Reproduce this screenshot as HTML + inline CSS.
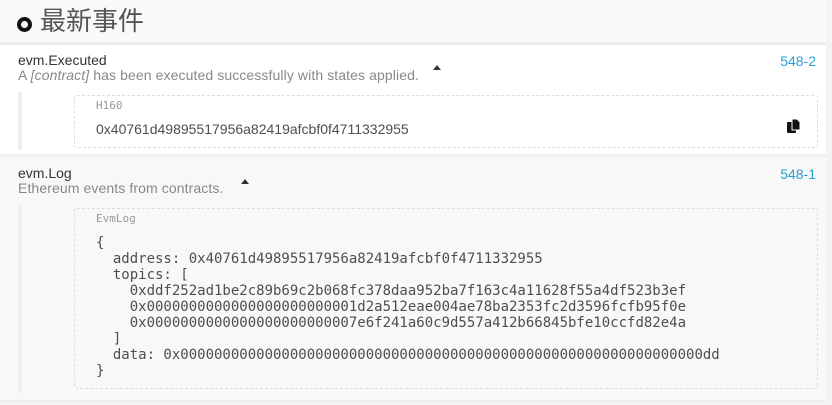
<!DOCTYPE html>
<html><head><meta charset="utf-8"><style>
*{margin:0;padding:0;box-sizing:border-box}
body{width:832px;height:405px;overflow:hidden;background:#f5f4f3;font-family:"Liberation Sans","Noto Sans CJK SC",sans-serif;color:#4e4e4e;position:relative}
.top{position:absolute;left:0;top:0;width:826px;height:42px;background:#fafafa}
.title{position:absolute;left:40px;top:3px;font-size:26px;color:#555;font-family:"Noto Sans CJK SC",sans-serif;line-height:34px}
.ring{position:absolute;left:17px;top:17px;width:15px;height:15px;border:4px solid #111;border-radius:50%}
.row{position:absolute;left:0;width:826px}
.r1{top:45px;height:109px;background:#fff}
.r2{top:157px;height:243px;background:#f8f8f8}
.sep{position:absolute;left:0;width:826px;height:4px;background:#eee}
.name{position:absolute;left:18px;font-size:14px;color:#333}
.desc{position:absolute;left:18px;font-size:14px;color:#888;letter-spacing:0.1px}
.num{position:absolute;right:10px;font-size:14px;color:#2a9fd6}
.caret{position:absolute;width:0;height:0;border-left:4px solid transparent;border-right:4px solid transparent;border-bottom:5px solid #333}
.bar{position:absolute;left:18px;width:4px;background:#eee}
.box{position:absolute;left:74px;width:744px;border:1px dashed #ddd;border-radius:3px}
.lbl{position:absolute;left:21px;font-family:"DejaVu Sans Mono",monospace;font-size:11px;color:#999}
pre{position:absolute;left:21px;font-family:"DejaVu Sans Mono",monospace;font-size:14px;line-height:16px;color:#4e4e4e}
</style></head><body>
<div class="top"><div class="ring"></div><div class="title">最新事件</div></div>
<div class="sep" style="top:42px"></div>
<div class="row r1">
 <div class="name" style="top:7px">evm.Executed</div>
 <div class="desc" style="top:22px">A <i>[contract]</i> has been executed successfully with states applied.</div>
 <div class="caret" style="left:433px;top:20px"></div>
 <div class="num" style="top:8px">548-2</div>
 <div class="bar" style="top:47px;height:58px"></div>
 <div class="box" style="top:50px;height:53px">
  <div class="lbl" style="top:3px">H160</div>
  <div style="position:absolute;left:21px;top:25px;font-size:14px">0x40761d49895517956a82419afcbf0f4711332955</div>
  <svg style="position:absolute;left:711px;top:22px" width="16" height="16" viewBox="0 0 16 16"><rect x="1" y="4" width="9" height="11" rx="1" fill="#111"/><path d="M6 1h5l3 3v8H6z" fill="#111" stroke="#fff" stroke-width="1"/></svg>
 </div>
</div>
<div class="sep" style="top:154px;height:3px;background:#f0f0f0"></div>
<div class="row r2">
 <div class="name" style="top:8px">evm.Log</div>
 <div class="desc" style="top:23px">Ethereum events from contracts.</div>
 <div class="caret" style="left:241px;top:22px"></div>
 <div class="num" style="top:9px">548-1</div>
 <div class="bar" style="top:48px;height:188px"></div>
 <div class="box" style="top:51px;height:181px;background:#f8f8f8">
  <div class="lbl" style="top:3px">EvmLog</div>
<pre style="top:26px">{
  address: 0x40761d49895517956a82419afcbf0f4711332955
  topics: [
    0xddf252ad1be2c89b69c2b068fc378daa952ba7f163c4a11628f55a4df523b3ef
    0x0000000000000000000000001d2a512eae004ae78ba2353fc2d3596fcfb95f0e
    0x0000000000000000000000007e6f241a60c9d557a412b66845bfe10ccfd82e4a
  ]
  data: 0x00000000000000000000000000000000000000000000000000000000000000dd
}</pre>
 </div>
</div>
<div class="sep" style="top:400px;height:2px;background:#eee"></div>
</body></html>
